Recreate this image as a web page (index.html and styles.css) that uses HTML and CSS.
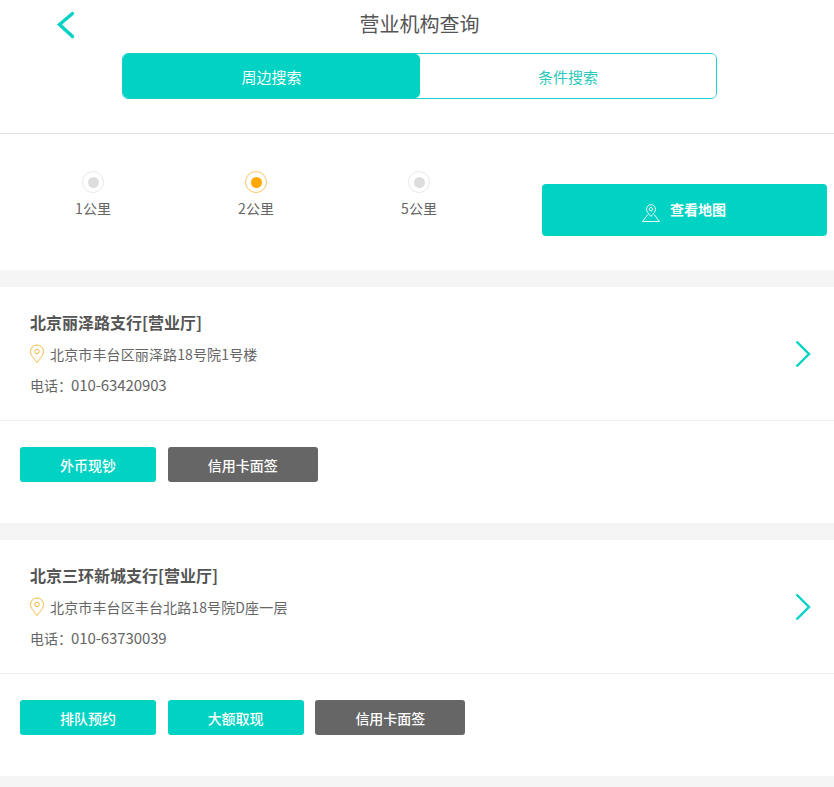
FILE: index.html
```html
<!DOCTYPE html>
<html lang="zh-CN">
<head>
<meta charset="utf-8">
<title>营业机构查询</title>
<link rel="stylesheet" href="styles.css">
</head>
<body>
<header class="top">
  <div class="title-row">
    <a class="back"><svg width="20" height="28" viewBox="0 0 20 28"><path d="M16.5 2.5 L3.5 13.5 L16.5 25.5" fill="none" stroke="#00d2c3" stroke-width="3.4" stroke-linecap="round" stroke-linejoin="miter"/></svg></a>
    <h1 class="title">营业机构查询</h1>
  </div>
  <div class="tabs">
    <div class="tab tab-on">周边搜索</div>
    <div class="tab">条件搜索</div>
  </div>
</header>
<section class="filter">
  <div class="radios">
    <div class="radio"><span class="dot"><i></i></span><span class="radio-label">1公里</span></div>
    <div class="radio radio-on"><span class="dot"><i></i></span><span class="radio-label">2公里</span></div>
    <div class="radio"><span class="dot"><i></i></span><span class="radio-label">5公里</span></div>
  </div>
  <a class="map-btn">
    <svg width="20" height="20" viewBox="0 0 20 20"><g fill="none" stroke="#fff" stroke-width="0.9"><path d="M10 13.5 C7.5 10.5 5.5 8.8 5.5 6.2 A4.5 4.5 0 0 1 14.5 6.2 C14.5 8.8 12.5 10.5 10 13.5 Z"/><circle cx="10" cy="6.2" r="1.7"/><path d="M6.8 11.5 L1.5 18.5 H18.5 L13.2 11.5"/></g></svg>
    <span>查看地图</span>
  </a>
</section>
<section class="card">
  <div class="info">
    <div class="info-text">
      <h2 class="name">北京丽泽路支行[营业厅]</h2>
      <p class="addr"><svg class="pin" width="16" height="20" viewBox="0 0 16 20"><g fill="none" stroke="#f5b942" stroke-width="1"><path d="M8 18.5 C4.5 14 1.5 11 1.5 7.5 A6.5 6.5 0 0 1 14.5 7.5 C14.5 11 11.5 14 8 18.5 Z"/><circle cx="8" cy="7.5" r="2.2"/></g></svg><span>北京市丰台区丽泽路18号院1号楼</span></p>
      <p class="tel">电话：<span class="tel-num">010-63420903</span></p>
    </div>
    <svg class="more" width="18" height="30" viewBox="0 0 18 30"><path d="M2.5 2.5 L15 15 L2.5 27.5" fill="none" stroke="#00d2c3" stroke-width="2.4"/></svg>
  </div>
  <div class="actions">
    <a class="btn">外币现钞</a>
    <a class="btn btn-gray">信用卡面签</a>
  </div>
</section>
<section class="card">
  <div class="info">
    <div class="info-text">
      <h2 class="name">北京三环新城支行[营业厅]</h2>
      <p class="addr"><svg class="pin" width="16" height="20" viewBox="0 0 16 20"><g fill="none" stroke="#f5b942" stroke-width="1"><path d="M8 18.5 C4.5 14 1.5 11 1.5 7.5 A6.5 6.5 0 0 1 14.5 7.5 C14.5 11 11.5 14 8 18.5 Z"/><circle cx="8" cy="7.5" r="2.2"/></g></svg><span>北京市丰台区丰台北路18号院D座一层</span></p>
      <p class="tel">电话：<span class="tel-num">010-63730039</span></p>
    </div>
    <svg class="more" width="18" height="30" viewBox="0 0 18 30"><path d="M2.5 2.5 L15 15 L2.5 27.5" fill="none" stroke="#00d2c3" stroke-width="2.4"/></svg>
  </div>
  <div class="actions">
    <a class="btn">排队预约</a>
    <a class="btn">大额取现</a>
    <a class="btn btn-gray">信用卡面签</a>
  </div>
</section>
</body>
</html>
```
FILE: styles.css
```css
* { box-sizing: border-box; }
html, body { margin: 0; padding: 0; }
body {
  background: #f5f5f5;
  color: #666;
  font-family: "Noto Sans CJK SC", "Liberation Sans", sans-serif;
  font-size: 14px;
  height: 787px;
  overflow: hidden;
}
.top {
  background: #fff;
  height: 134px;
  border-bottom: 1px solid #e0e0e0;
  padding-top: 9px;
}
.title-row {
  position: relative;
  height: 44px;
}
.back {
  position: absolute;
  left: 56px;
  top: 2px;
  display: block;
  height: 28px;
}
.back svg { display: block; }
.title {
  margin: 0;
  text-align: center;
  font-size: 20px;
  font-weight: 400;
  line-height: 29px;
  color: #555;
  padding-left: 5px;
}
.tabs {
  display: flex;
  width: 595px;
  height: 46px;
  margin-left: 122px;
  border: 1px solid #1ccdc8;
  border-radius: 6px;
  overflow: hidden;
}
.tab {
  flex: 1;
  display: flex;
  align-items: center;
  justify-content: center;
  font-size: 15px;
  color: #2cc9bb;
  background: #fff;
}
.tab-on {
  flex: 0 0 297px;
  color: #fff;
  background: #00d2c3;
  border-radius: 0 5px 5px 0;
}
.filter {
  background: #fff;
  height: 136px;
  display: flex;
  padding: 37px 7px 0 11.5px;
}
.radios { display: flex; width: 523.5px; }
.radio {
  width: 163px;
  display: flex;
  flex-direction: column;
  align-items: center;
}
.dot {
  width: 22px;
  height: 22px;
  border-radius: 50%;
  border: 1px solid #e8e8e8;
  display: flex;
  align-items: center;
  justify-content: center;
}
.dot i {
  display: block;
  width: 11px;
  height: 11px;
  border-radius: 50%;
  background: #ddd;
}
.radio-on .dot { border-color: #f8c468; }
.radio-on .dot i { background: #ffa800; }
.radio-label {
  margin-top: 5px;
  line-height: 20px;
  color: #666;
}
.map-btn {
  width: 285px;
  height: 52px;
  margin-top: 13px;
  margin-left: 7px;
  padding: 0 2px 3px 0;
  background: #00d2c3;
  border-radius: 4px;
  color: #fff;
  font-size: 14px;
  font-weight: 700;
  display: flex;
  align-items: center;
  justify-content: center;
  gap: 9px;
}
.map-btn svg { margin-top: 9px; }
.card {
  background: #fff;
  margin-top: 17px;
  height: 236px;
}
.info {
  height: 134px;
  border-bottom: 1px solid #f0f0f0;
  padding: 21px 22px 0 30px;
  display: flex;
  justify-content: space-between;
  align-items: flex-start;
}
.info-text { min-width: 0; }
.name {
  margin: 0;
  font-size: 16px;
  font-weight: 700;
  line-height: 28px;
  color: #555;
}
.addr {
  margin: 7px 0 0;
  display: flex;
  align-items: center;
  gap: 5px;
  font-size: 14px;
  letter-spacing: 0.13px;
  line-height: 22px;
  color: #666;
}
.pin { margin-left: -1px; }
.tel {
  margin: 10px 0 0;
  font-size: 14px;
  line-height: 20px;
  color: #666;
}
.tel-num {
  font-size: 15px;
  letter-spacing: -0.1px;
  margin-left: -1px;
}
.more { margin-top: 31px; }
.actions {
  display: flex;
  gap: 11.8px;
  padding: 26px 0 0 20px;
}
.btn {
  width: 135.9px;
  height: 35px;
  background: #00d2c3;
  border-radius: 3px;
  color: #fff;
  font-size: 14px;
  font-weight: 500;
  display: flex;
  align-items: center;
  justify-content: center;
}
.btn-gray {
  width: 150px;
  background: #666;
}
```
